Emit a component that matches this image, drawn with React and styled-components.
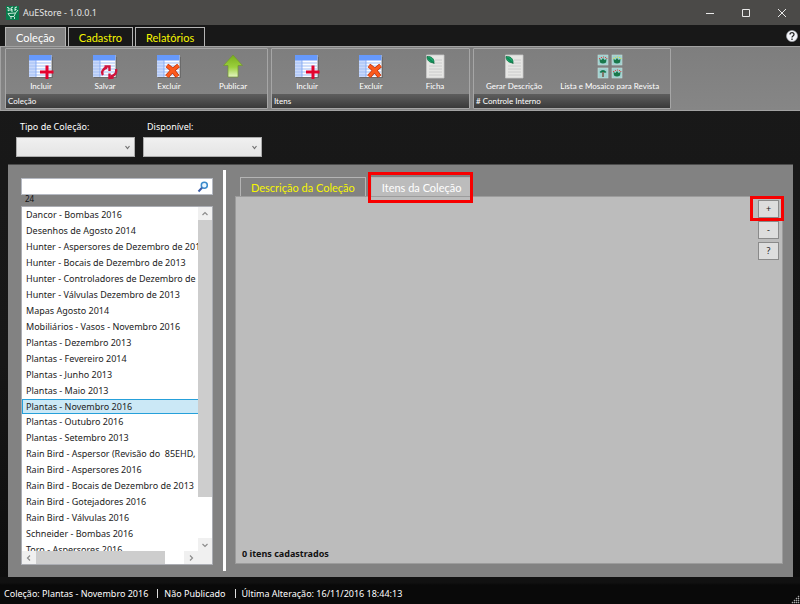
import React, { useState } from 'react';
import styled, { createGlobalStyle, css } from 'styled-components';

const GlobalStyle = createGlobalStyle`
  *, *::before, *::after { box-sizing: border-box; }
  body {
    margin: 0;
    background: #141414;
    color: #fff;
    font: 9px/12px "Noto Sans", "Open Sans", sans-serif;
  }
  button, input, select { font: inherit; color: inherit; margin: 0; }
  svg { display: block; }
`;

const Window = styled.div`
  display: flex;
  flex-direction: column;
  min-height: 100vh;
  background: linear-gradient(#191919 0%, #171717 60%, #0c0c0c 100%);
`;

const TitleBar = styled.header`
  display: flex;
  align-items: center;
  height: 25px;
  padding-left: 6px;
  background: #4b4a48;
`;

const Title = styled.h1`
  flex: 1;
  margin: 0 0 0 4px;
  font-size: 9px;
  font-weight: 400;
  color: #e6e6e6;
`;

const CaptionButton = styled.button`
  display: grid;
  place-items: center;
  width: 36px;
  height: 24px;
  padding: 0;
  border: 0;
  background: none;
  color: #e8e8e8;
  &:hover { background: #666; }
`;

const MenuStrip = styled.div`
  display: flex;
  justify-content: space-between;
  align-items: flex-end;
  height: 21px;
  padding: 0 2px 0 5px;
  background: #181818;
`;

const TabList = styled.div`
  display: flex;
  gap: ${p => p.$gap}px;
`;

const Tab = styled.button`
  height: 19px;
  padding: 0 10px;
  border: 1px solid #b4b4b4;
  border-bottom: 0;
  background: ${p => p.$fill || 'transparent'};
  color: #f6f600;
  font: 11px/17px Lato, "Noto Sans", sans-serif;
  white-space: nowrap;
  ${p => p.$active && css`color: #fff;`}
`;

const HelpButton = styled.button`
  align-self: center;
  padding: 0;
  border: 0;
  background: none;
`;

const Ribbon = styled.div`
  display: flex;
  gap: 3px;
  padding: 1px 4px 1px;
  border: 1px solid #a2a2a2;
  border-right: 0;
  background: linear-gradient(#7e7e7e, #868686);
`;

const RibbonGroup = styled.section`
  display: flex;
  flex-direction: column;
  border: 1px solid #a6a6a6;
  border-radius: 1px;
`;

const RibbonItems = styled.div`
  display: flex;
  height: 45px;
  padding: 0 2px 0 3px;
`;

const RibbonButton = styled.button`
  display: flex;
  flex-direction: column;
  align-items: center;
  min-width: 64px;
  padding: 5px 9px 0;
  border: 0;
  background: none;
  font: 8px/12px Lato, "Noto Sans", sans-serif;
  color: #fff;
  white-space: nowrap;
`;

const RibbonCaption = styled.h2`
  margin: 0;
  padding: 0 2px;
  height: 14px;
  background: linear-gradient(#5e5e5e, #3a3a3a);
  font: 8px/14px Lato, "Noto Sans", sans-serif;
`;

const Filters = styled.div`
  display: flex;
  gap: 8px;
  padding: 10px 16px 7px;
`;

const Field = styled.label`
  display: grid;
  gap: 4px;
  width: 119px;
`;

const FieldLabel = styled.span`
  padding-left: 4px;
`;

const SelectFrame = styled.span`
  display: grid;
  align-items: center;
  height: 20px;
  border: 1px solid #acacac;
  background: linear-gradient(#f0f0f0, #e4e4e4);
  > * { grid-area: 1 / 1; }
  > svg { justify-self: end; margin-right: 4px; pointer-events: none; }
`;

const Select = styled.select`
  width: 100%;
  height: 100%;
  border: 0;
  padding: 0 16px 0 4px;
  appearance: none;
  background: none;
  color: #222;
`;

const Workspace = styled.main`
  flex: 1;
  display: flex;
  margin: 0 7px 0 8px;
  padding: 5px 10px 6px 13px;
  border-top: 1px solid #4c4c4c;
  background: #828282;
`;

const Sidebar = styled.aside`
  display: flex;
  flex-direction: column;
  width: 192px;
  padding: 8px 0 6px;
`;

const SearchBox = styled.label`
  display: flex;
  align-items: center;
  height: 17px;
  padding-right: 3px;
  border: 1px solid #b5b9c2;
  background: #fff;
`;

const SearchInput = styled.input`
  flex: 1;
  min-width: 0;
  border: 0;
  outline: 0;
  padding: 0 4px;
  background: none;
  color: #222;
`;

const Count = styled.output`
  height: 11px;
  padding-left: 4px;
  font: 8px/8px "Noto Sans", sans-serif;
  color: #111;
`;

const ListFrame = styled.div`
  flex: 1;
  display: grid;
  grid-template-columns: minmax(0, 1fr) 14px;
  grid-template-rows: minmax(0, 1fr) 13px;
  border: 1px solid #abadb3;
  background: #fff;
`;

const List = styled.ul`
  height: 0;
  min-height: 100%;
  margin: 0;
  padding: 0;
  overflow: hidden;
  list-style: none;
`;

const Item = styled.li`
  height: 16px;
  padding: 0 3px;
  border: 1px solid transparent;
  line-height: 14px;
  color: #222;
  white-space: pre;
  cursor: default;
  ${p => p.$selected && css`
    height: 15px;
    line-height: 13px;
    border-color: #26a0da;
    border-right: 0;
    background: #cbe8f6;
  `}
`;

const ScrollBar = styled.div`
  display: flex;
  flex-direction: ${p => (p.$vertical ? 'column' : 'row')};
  background: #fff;
`;

const ScrollArrow = styled.button`
  display: grid;
  place-items: center;
  flex: none;
  width: 14px;
  height: 13px;
  padding: 0;
  border: 0;
  background: #f0f0f0;
  color: #8c8c8c;
`;

const ScrollTrack = styled.div`
  flex: 1;
  display: grid;
  ${p => (p.$vertical
    ? css`grid-template-rows: 87fr 13fr;`
    : css`grid-template-columns: 87fr 13fr;`)}
`;

const ScrollThumb = styled.div`
  background: #cdcdcd;
`;

const ScrollCorner = styled.div`
  background: #f0f0f0;
`;

const Splitter = styled.div`
  width: 3px;
  margin: 0 9px 0 10px;
  background: #fff;
`;

const Detail = styled.section`
  flex: 1;
  display: flex;
  flex-direction: column;
  min-width: 0;
  padding: 7px 0 7px;
`;

const DetailTabs = styled.div`
  padding-left: 5px;
`;

const Highlight = styled.span`
  position: absolute;
  inset: ${p => p.$inset};
  border: 3px solid #f80000;
  pointer-events: none;
`;

const Marked = styled.div`
  position: relative;
  display: flex;
`;

const TabPanel = styled.div`
  flex: 1;
  display: flex;
  flex-direction: column;
  justify-content: space-between;
  padding: 3px 3px 3px 6px;
  border: 1px solid #9c9c9c;
  background: #bcbcbc;
`;

const SideButtons = styled.div`
  display: grid;
  gap: 3px;
  justify-items: end;
`;

const SquareButton = styled.button`
  width: 21px;
  height: 18px;
  padding: 0;
  border: 1px solid #8a8a8a;
  background: #dddddd;
  color: #222;
  line-height: 14px;
`;

const Total = styled.p`
  margin: 0;
  font-weight: 700;
  color: #111;
`;

const StatusBar = styled.footer`
  display: flex;
  align-items: center;
  height: 27px;
  padding: 6px 0 0 4px;
  background: linear-gradient(#111 20%, #090909 30%);
`;

const StatusText = styled.span`
  padding-right: 9px;
`;

const Separator = styled.span`
  width: 1px;
  height: 9px;
  background: #ddd;
  & + span { padding-left: 6px; }
`;

const Grip = styled.svg`
  align-self: flex-end;
  margin-left: auto;
`;

const SheetGrid = () => (
  <>
    <path d="M2 23.500h22.500V3" fill="none" stroke="#555" strokeWidth="1" opacity=".5" />
    <path d="M1 1h22.500v22H1z" fill="#fbfcff" />
    <path d="M1 6h7v17H1z" fill="#c9d9fb" />
    <path d="M1 1h22.500v5.500H1z" fill="#6699fb" />
    <path d="M1 9h22M1 12h22M1 15h22M1 18h22M1 21h22" stroke="#a3bff5" strokeWidth="1" />
    <path d="M8 6v17" stroke="#7ba3f2" strokeWidth=".8" />
  </>
);

const GridIcon = ({ mark }) => (
  <svg width="26" height="26" viewBox="0 0 26 26" aria-hidden="true">
    <SheetGrid />
    {mark === 'add' && <path d="M12 18h13.500M19 11.500v13.500" stroke="#e3032e" strokeWidth="3" />}
    {mark === 'delete' && (
      <>
        <path d="M11 11.500q6 4 10.500 11M22.500 11.500q-7 5-11.500 11" fill="none" stroke="#b92e08" strokeWidth="4.500" />
        <path d="M11 11.500q6 4 10.500 11M22.500 11.500q-7 5-11.500 11" fill="none" stroke="#fb5a1d" strokeWidth="3.200" />
      </>
    )}
    {mark === 'save' && (
      <g fill="none" stroke="#d1123c" strokeWidth="2.400">
        <path d="M11 21c-2-3 0-6.500 4-7.500M24 15c1 4-1.500 7-5.500 7.500" />
        <path d="M12.500 12.500h5v4.500M21.500 23.500L17.500 24v-4.500" />
      </g>
    )}
  </svg>
);

const PublishIcon = () => (
  <svg width="26" height="26" viewBox="0 0 26 26" aria-hidden="true">
    <defs>
      <linearGradient id="publish" x2="0" y2="1">
        <stop offset="0" stopColor="#78ad1c" />
        <stop offset=".55" stopColor="#9bd03c" />
        <stop offset="1" stopColor="#e5f5c4" />
      </linearGradient>
    </defs>
    <path d="M13 1l9.500 10.500H18V23H8V11.500H3.500z" fill="url(#publish)" stroke="#71952e" strokeWidth=".7" />
  </svg>
);

const SheetIcon = () => (
  <svg width="26" height="26" viewBox="0 0 26 26" aria-hidden="true">
    <path d="M4.500 1h17.500v23h-17.500z" fill="#e6e6e4" stroke="#c6c6c6" strokeWidth=".8" />
    <path d="M13 6h7M13 9h7M7 12h13M7 15h13M7 18h13M7 21h13" stroke="#c4c4c4" strokeWidth=".8" />
    <path d="M5 2.500c4-.5 7.500 2 7 6.500-4.500-.3-7-2.500-7-6.500z" fill="#1aa56a" stroke="#07663a" strokeWidth=".7" />
    <path d="M6 3.500l6.500 6.500" stroke="#076038" strokeWidth=".8" />
  </svg>
);

const PLANTS = [[0, 0, '#d94747'], [14, 0, '#cfe04a'], [0, 13, ''], [14, 13, '#d94747']];

const MosaicIcon = () => (
  <svg width="26" height="26" viewBox="0 0 26 26" aria-hidden="true">
    {PLANTS.map(([x, y, tip]) => (
      <g key={`${x}-${y}`} transform={`translate(${x + 1} ${y + 1})`}>
        <rect width="10" height="10" fill="#9fd0cf" stroke="#c3dcda" strokeWidth=".6" />
        {tip ? (
          <>
            <path d="M1.500 4l2 1L5 3l1.500 2 2-1-.5 3.500q-3 2-6 0z" fill="#19784b" />
            <path d="M1 3.500h1.200M3 2.500h1M5 2h1M7 2.500h1M8.300 3.500h1" stroke={tip} strokeWidth="1.200" />
          </>
        ) : (
          <>
            <path d="M1.500 4q3.500-4 7 0L7 5 5.500 4h-1L3 5z" fill="#16774d" />
            <path d="M5 4v5" stroke="#704832" strokeWidth="1.300" />
          </>
        )}
      </g>
    ))}
  </svg>
);

const AppLogo = () => (
  <svg width="13" height="14" viewBox="0 0 13 14" aria-hidden="true">
    <rect width="13" height="14" fill="#087b4c" />
    <path d="M1 1.500l2 .5v3L1.500 4M5 2l2-1M5 2v3h2M5 3.500h1.500M9 5V1.500l2-.5M9 3.500h1.500" stroke="#d8f2e5" fill="none" />
    <path d="M2 7.500l7.500-.5-1.500 3.500H4zM9.500 7L12 4" stroke="#c4e8d5" fill="none" />
    <path d="M4.500 12h1M8 12h1" stroke="#fff" strokeWidth="1.500" />
  </svg>
);

const HelpIcon = () => (
  <svg width="12" height="12" viewBox="0 0 12 12" aria-hidden="true">
    <circle cx="6" cy="6" r="5.500" fill="#f4f5fa" stroke="#b0b3bb" strokeWidth=".6" />
    <path d="M4 4.500c0-2.500 4-2.500 4 0C8 6 6 6 6 7.500M6 8.500V10" fill="none" stroke="#252525" strokeWidth="1.300" />
  </svg>
);

const SearchIcon = () => (
  <svg width="12" height="12" viewBox="0 0 12 12" aria-hidden="true">
    <circle cx="7.300" cy="4.300" r="3" fill="#eaf6ff" stroke="#3a8acb" strokeWidth="1.500" />
    <path d="M5 6.800L1.500 10.500" stroke="#3a5ca8" strokeWidth="2" />
  </svg>
);

const PATHS = {
  up: 'M1.500 5L4 2.500 6.500 5',
  down: 'M1.500 3L4 5.500 6.500 3',
  left: 'M5 1.500L2.500 4 5 6.500',
  right: 'M3 1.500L5.500 4 3 6.500',
};

const Chevron = ({ to }) => (
  <svg width="8" height="8" viewBox="0 0 8 8" fill="none" stroke="currentColor" aria-hidden="true">
    <path d={PATHS[to]} strokeWidth="1.200" />
  </svg>
);

const ComboArrow = () => (
  <svg width="5" height="5" viewBox="0 0 5 5" aria-hidden="true">
    <path d="M.5 1l2 2.500 2-2.500" fill="none" stroke="#707070" strokeWidth="1.200" />
  </svg>
);

const CAPTION_SHAPES = [
  ['Minimizar', 'M1 5.500h8'],
  ['Maximizar', 'M1.500 1.500h7v7h-7z'],
  ['Fechar', 'M1 1l8 8M9 1L1 9'],
];

const GROUPS = [
  {
    name: 'Coleção',
    items: [
      ['Incluir', <GridIcon mark="add" />],
      ['Salvar', <GridIcon mark="save" />],
      ['Excluir', <GridIcon mark="delete" />],
      ['Publicar', <PublishIcon />],
    ],
  },
  {
    name: 'Itens',
    items: [
      ['Incluir', <GridIcon mark="add" />],
      ['Excluir', <GridIcon mark="delete" />],
      ['Ficha', <SheetIcon />],
    ],
  },
  {
    name: '# Controle Interno',
    items: [
      ['Gerar Descrição', <SheetIcon />],
      ['Lista e Mosaico para Revista', <MosaicIcon />],
    ],
  },
];

const COLLECTIONS = [
  'Dancor - Bombas 2016',
  'Desenhos de Agosto 2014',
  'Hunter - Aspersores de Dezembro de 2013',
  'Hunter - Bocais de Dezembro de 2013',
  'Hunter - Controladores de Dezembro de 2013',
  'Hunter - Válvulas Dezembro de 2013',
  'Mapas Agosto 2014',
  'Mobiliários - Vasos - Novembro 2016',
  'Plantas - Dezembro 2013',
  'Plantas - Fevereiro 2014',
  'Plantas - Junho 2013',
  'Plantas - Maio 2013',
  'Plantas - Novembro 2016',
  'Plantas - Outubro 2016',
  'Plantas - Setembro 2013',
  'Rain Bird - Aspersor (Revisão do  85EHD,',
  'Rain Bird - Aspersores 2016',
  'Rain Bird - Bocais de Dezembro de 2013',
  'Rain Bird - Gotejadores 2016',
  'Rain Bird - Válvulas 2016',
  'Schneider - Bombas 2016',
  'Toro - Aspersores 2016',
];

const Combo = ({ label }) => (
  <Field>
    <FieldLabel>{label}</FieldLabel>
    <SelectFrame>
      <Select defaultValue=""><option value="" /></Select>
      <ComboArrow />
    </SelectFrame>
  </Field>
);

export default function App() {
  const [selected, setSelected] = useState('Plantas - Novembro 2016');
  return (
    <Window>
      <GlobalStyle />
      <TitleBar>
        <AppLogo />
        <Title>AuEStore - 1.0.0.1</Title>
        {CAPTION_SHAPES.map(([name, d]) => (
          <CaptionButton key={name} aria-label={name}>
            <svg width="10" height="10" viewBox="0 0 10 10" fill="none" stroke="currentColor"><path d={d} /></svg>
          </CaptionButton>
        ))}
      </TitleBar>
      <MenuStrip>
        <TabList role="tablist" $gap={2}>
          <Tab role="tab" aria-selected="true" $active $fill="#828282">Coleção</Tab>
          <Tab role="tab" aria-selected="false">Cadastro</Tab>
          <Tab role="tab" aria-selected="false">Relatórios</Tab>
        </TabList>
        <HelpButton aria-label="Ajuda"><HelpIcon /></HelpButton>
      </MenuStrip>
      <Ribbon>
        {GROUPS.map(group => (
          <RibbonGroup key={group.name}>
            <RibbonItems>
              {group.items.map(([label, icon]) => (
                <RibbonButton key={label}>{icon}{label}</RibbonButton>
              ))}
            </RibbonItems>
            <RibbonCaption>{group.name}</RibbonCaption>
          </RibbonGroup>
        ))}
      </Ribbon>
      <Filters>
        <Combo label="Tipo de Coleção:" />
        <Combo label="Disponível:" />
      </Filters>
      <Workspace>
        <Sidebar>
          <SearchBox>
            <SearchInput type="text" aria-label="Pesquisar" />
            <SearchIcon />
          </SearchBox>
          <Count>24</Count>
          <ListFrame>
            <List role="listbox" aria-label="Coleções">
              {COLLECTIONS.map(name => (
                <Item
                  key={name}
                  role="option"
                  aria-selected={name === selected}
                  $selected={name === selected}
                  onClick={() => setSelected(name)}
                >
                  {name}
                </Item>
              ))}
            </List>
            <ScrollBar $vertical>
              <ScrollArrow aria-label="Rolar para cima"><Chevron to="up" /></ScrollArrow>
              <ScrollTrack $vertical><ScrollThumb /></ScrollTrack>
              <ScrollArrow aria-label="Rolar para baixo"><Chevron to="down" /></ScrollArrow>
            </ScrollBar>
            <ScrollBar>
              <ScrollArrow aria-label="Rolar para a esquerda"><Chevron to="left" /></ScrollArrow>
              <ScrollTrack><ScrollThumb /></ScrollTrack>
              <ScrollArrow aria-label="Rolar para a direita"><Chevron to="right" /></ScrollArrow>
            </ScrollBar>
            <ScrollCorner />
          </ListFrame>
        </Sidebar>
        <Splitter />
        <Detail>
          <DetailTabs>
            <TabList role="tablist" $gap={5}>
              <Tab role="tab" aria-selected="false">Descrição da Coleção</Tab>
              <Marked>
                <Tab role="tab" aria-selected="true" $active $fill="#bcbcbc">Itens da Coleção</Tab>
                <Highlight $inset="-5px -1px -7px -3px" />
              </Marked>
            </TabList>
          </DetailTabs>
          <TabPanel role="tabpanel">
            <SideButtons>
              <Marked>
                <SquareButton aria-label="Adicionar item">+</SquareButton>
                <Highlight $inset="-4px -5px -3px -8px" />
              </Marked>
              <SquareButton aria-label="Remover item">-</SquareButton>
              <SquareButton aria-label="Ajuda do item">?</SquareButton>
            </SideButtons>
            <Total>0 itens cadastrados</Total>
          </TabPanel>
        </Detail>
      </Workspace>
      <StatusBar>
        <StatusText>Coleção: {selected}</StatusText>
        <Separator />
        <StatusText>Não Publicado</StatusText>
        <Separator />
        <StatusText>Última Alteração: 16/11/2016 18:44:13</StatusText>
        <Grip width="9" height="9" viewBox="0 0 9 9" aria-hidden="true">
          <path d="M7 1h1v1H7zM5 3h1v1H5zM7 3h1v1H7zM3 5h1v1H3zM5 5h1v1H5zM7 5h1v1H7zM1 7h1v1H1zM3 7h1v1H3zM5 7h1v1H5zM7 7h1v1H7z" fill="#ccc" stroke="#999" strokeWidth=".5" />
        </Grip>
      </StatusBar>
    </Window>
  );
}
